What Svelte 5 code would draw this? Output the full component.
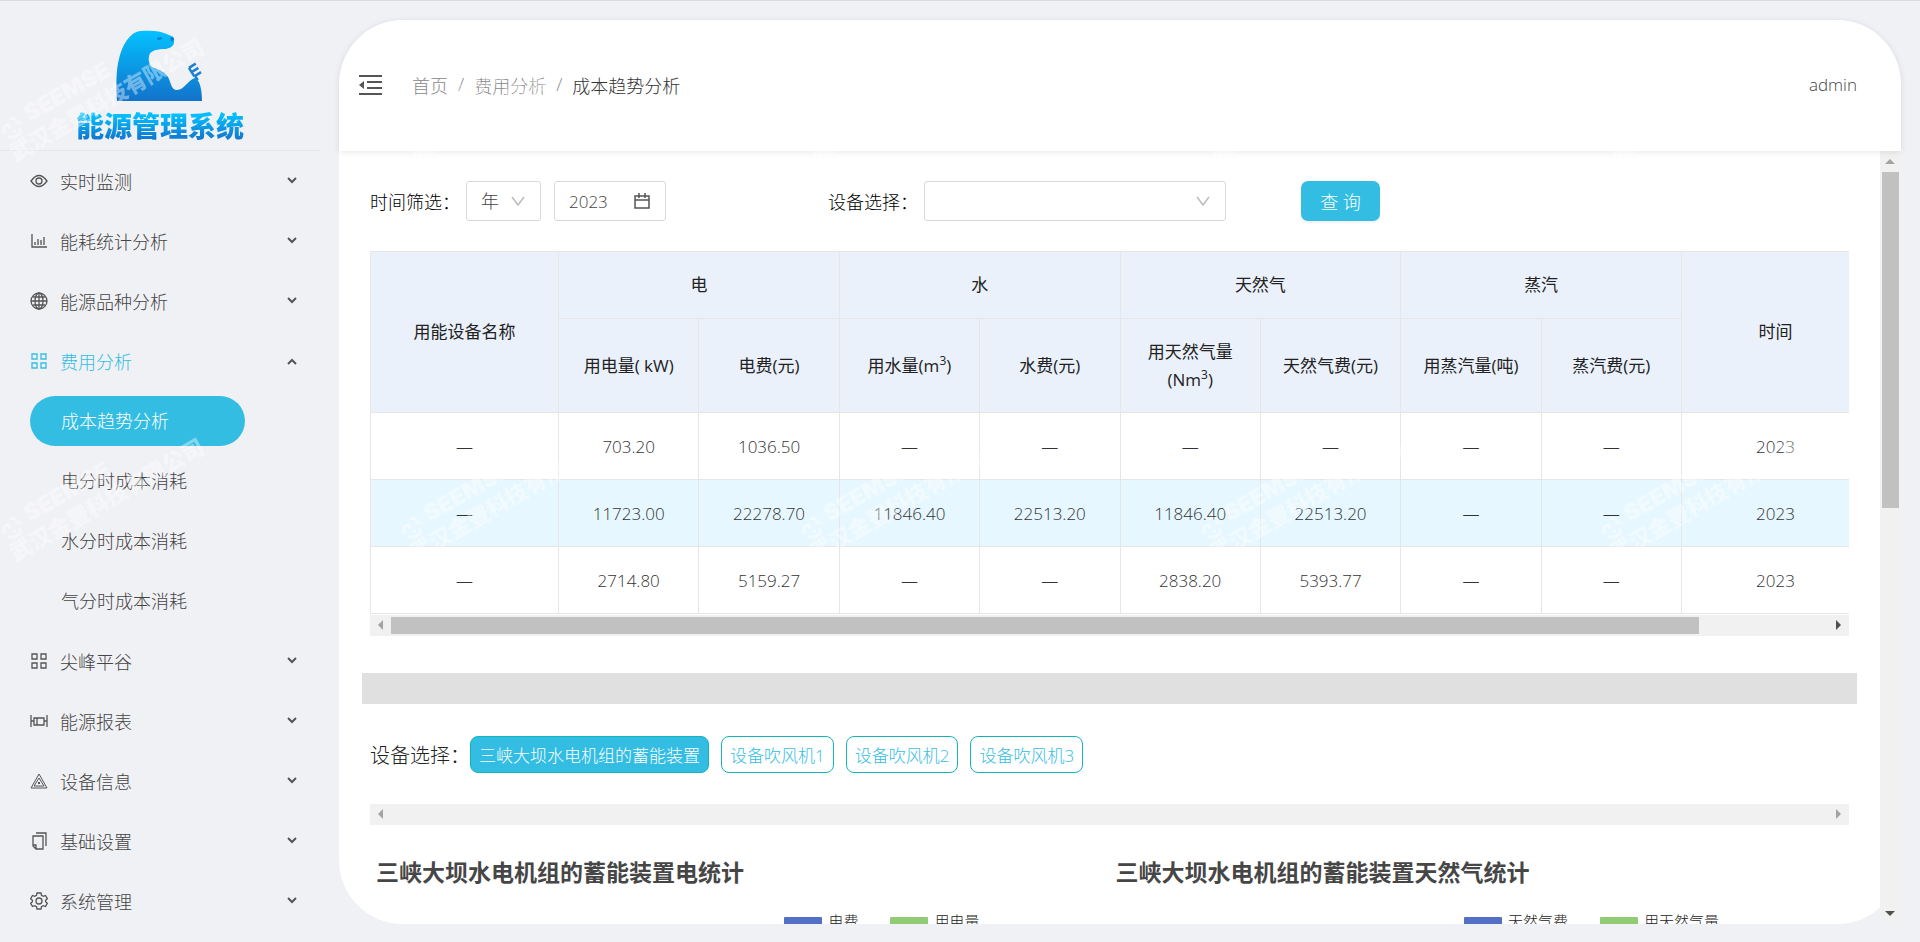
<script lang="ts">
    type MenuItem = { icon: string; label: string; open?: boolean; children?: string[] };

    let menu: MenuItem[] = [
        { icon: 'eye', label: '实时监测' },
        { icon: 'chart', label: '能耗统计分析' },
        { icon: 'globe', label: '能源品种分析' },
        {
            icon: 'grid',
            label: '费用分析',
            open: true,
            children: ['成本趋势分析', '电分时成本消耗', '水分时成本消耗', '气分时成本消耗']
        },
        { icon: 'grid', label: '尖峰平谷' },
        { icon: 'report', label: '能源报表' },
        { icon: 'triangle', label: '设备信息' },
        { icon: 'copy', label: '基础设置' },
        { icon: 'gear', label: '系统管理' }
    ];

    const rows = [
        ['—', '703.20', '1036.50', '—', '—', '—', '—', '—', '—', '2023'],
        ['—', '11723.00', '22278.70', '11846.40', '22513.20', '11846.40', '22513.20', '—', '—', '2023'],
        ['—', '2714.80', '5159.27', '—', '—', '2838.20', '5393.77', '—', '—', '2023']
    ];

    const devices = ['三峡大坝水电机组的蓄能装置', '设备吹风机1', '设备吹风机2', '设备吹风机3'];

    const charts = [
        { title: '三峡大坝水电机组的蓄能装置电统计', legend: ['电费', '用电量'] },
        { title: '三峡大坝水电机组的蓄能装置天然气统计', legend: ['天然气费', '用天然气量'] }
    ];

    let currentPage = '成本趋势分析';
    let currentDevice = devices[0];
    let timeType = 'year';
    let year = '2023';
    let device = '';
    let hoverRow = 1;

    function toggle(item: MenuItem) {
        item.open = !item.open;
        menu = menu;
    }
</script>

<div class="layout">
    <aside class="sidebar">
        <div class="logo">
            <svg class="bear" width="88" height="72" viewBox="0 0 88 72" aria-hidden="true">
                <defs>
                    <linearGradient id="bearFill" x1="0" y1="0" x2="0" y2="1">
                        <stop offset="0" stop-color="#04c1ff" />
                        <stop offset="1" stop-color="#1273cb" />
                    </linearGradient>
                </defs>
                <path
                    fill="url(#bearFill)"
                    d="M1 71C0 56 0 40 3 29C7 12 16 1 25 1C36 0 46 1 53 5C57 6 59 8 58 12C58 16 54 18 50 19C42 19 34 20 33 26C32 32 34 36 38 38C44 40 49 42 52 47C55 52 55 60 61 60C68 60 72 50 79 48C84 50 86 60 86 71Z"
                />
                <path d="M41 8l4-1l1 2l-4 1zM54 8l3-1l1 2l-2 3z" fill="#1674c8" />
                <path
                    transform="translate(79 40) rotate(-32)"
                    d="M-4-5v10M-4-5h8M-4 0h8M-4 5h8M-3 5v5"
                    fill="none"
                    stroke="#1b7fd4"
                    stroke-width="2.4"
                />
            </svg>
            <h1>能源管理系统</h1>
        </div>
        <nav>
            {#each menu as item}
                <button class="menu-title" class:active={item.open} on:click={() => toggle(item)}>
                    <svg class="menu-icon" width="18" height="18" viewBox="0 0 18 18" aria-hidden="true">
                        {#if item.icon === 'eye'}
                            <path d="M1 9Q9-2 17 9Q9 20 1 9Z" />
                            <circle cx="9" cy="9" r="3" />
                        {:else if item.icon === 'chart'}
                            <path d="M2 2v13h15M5 13v-3M8 13V7M11 13V8M14 13V5" />
                        {:else if item.icon === 'globe'}
                            <circle cx="9" cy="9" r="8" />
                            <ellipse cx="9" cy="9" rx="4" ry="8" />
                            <path d="M1 9h16M9 1v16M3 5h12M3 13h12" />
                        {:else if item.icon === 'grid'}
                            <path d="M2 2h5v5h-5zM11 2h5v5h-5zM2 11h5v5h-5zM11 11h5v5h-5z" />
                        {:else if item.icon === 'report'}
                            <path d="M1 3v12M17 3v12M1 9h3M14 9h3M4 6h10v7H4zM7 6v7" />
                        {:else if item.icon === 'triangle'}
                            <g stroke-width="1">
                                <path d="M9 2L17 16H1ZM9 6L14 14H4Z" />
                                <path d="M9 10v2" stroke-width="2" />
                            </g>
                        {:else if item.icon === 'copy'}
                            <path d="M3 4h10v13H6L3 14zM3 13h3v4M6 1h10v13" />
                        {:else}
                            <circle cx="9" cy="9" r="3" />
                            <path
                                d="M7 1h4l.5 2.300l1.800 1l2.200-.8l1.800 3.200l-1.700 1.500v1.600l1.700 1.500l-1.800 3.200l-2.200-.8l-1.800 1L11 17H7l-.5-2.300l-1.800-1l-2.200.8l-1.800-3.200l1.700-1.500V8.200L.7 6.700l1.800-3.200l2.200.8l1.800-1z"
                            />
                        {/if}
                    </svg>
                    <span>{item.label}</span>
                    <svg class="arrow" class:up={item.open} width="12" height="8" viewBox="0 0 12 8" aria-hidden="true">
                        <path d="M2 1l4 4l4-4" />
                    </svg>
                </button>
                {#if item.open && item.children}
                    <ul>
                        {#each item.children as child}
                            <li>
                                <a
                                    href="#/{child}"
                                    class:current={child === currentPage}
                                    on:click={() => (currentPage = child)}>{child}</a
                                >
                            </li>
                        {/each}
                    </ul>
                {/if}
            {/each}
        </nav>
    </aside>

    <main>
        <header>
            <button class="fold" aria-label="收起菜单">
                <svg width="24" height="22" viewBox="0 0 24 22" aria-hidden="true">
                    <path d="M0 2h23M8 8h15M8 14h15M0 20h23" fill="none" stroke="#555" stroke-width="2" />
                    <path d="M0 11l5-4v8z" fill="#555" />
                </svg>
            </button>
            <div class="breadcrumb">
                <a href="#/">首页</a>
                <i>/</i>
                <a href="#/cost">费用分析</a>
                <i>/</i>
                <span>成本趋势分析</span>
            </div>
            <span class="user">admin</span>
        </header>

        <div class="scroll-area">
            <div class="content">
                <form class="filters" on:submit|preventDefault>
                    <label for="time-type">时间筛选：</label>
                    <div class="field time-type">
                        <select id="time-type" bind:value={timeType}>
                            <option value="year">年</option>
                            <option value="month">月</option>
                            <option value="day">日</option>
                        </select>
                        <svg width="14" height="12" viewBox="0 0 14 12" aria-hidden="true">
                            <path d="M1 2l6 8l6-8" />
                        </svg>
                    </div>
                    <div class="field year">
                        <input type="text" aria-label="年份" bind:value={year} />
                        <svg class="dark" width="16" height="16" viewBox="0 0 16 16" aria-hidden="true">
                            <path d="M1 3h14v12H1zM1 7h14M5 0v5M11 0v5" />
                        </svg>
                    </div>
                    <label class="device-label" for="device">设备选择：</label>
                    <div class="field device">
                        <select id="device" bind:value={device}>
                            <option value=""></option>
                            {#each devices as d}
                                <option value={d}>{d}</option>
                            {/each}
                        </select>
                        <svg width="14" height="12" viewBox="0 0 14 12" aria-hidden="true">
                            <path d="M1 2l6 8l6-8" />
                        </svg>
                    </div>
                    <button class="search">查 询</button>
                </form>

                <div class="table-wrap">
                    <table>
                        <colgroup>
                            <col class="name" />
                            <col span="8" />
                            <col class="name" />
                        </colgroup>
                        <thead>
                            <tr>
                                <th rowspan="2">用能设备名称</th>
                                <th colspan="2">电</th>
                                <th colspan="2">水</th>
                                <th colspan="2">天然气</th>
                                <th colspan="2">蒸汽</th>
                                <th rowspan="2">时间</th>
                            </tr>
                            <tr class="sub">
                                <th>用电量( kW)</th>
                                <th>电费(元)</th>
                                <th>用水量(m<sup>3</sup>)</th>
                                <th>水费(元)</th>
                                <th>用天然气量(Nm<sup>3</sup>)</th>
                                <th>天然气费(元)</th>
                                <th>用蒸汽量(吨)</th>
                                <th>蒸汽费(元)</th>
                            </tr>
                        </thead>
                        <tbody>
                            {#each rows as row, i}
                                <tr class:hover={i === hoverRow} on:mouseenter={() => (hoverRow = i)}>
                                    {#each row as cell}
                                        <td>{cell}</td>
                                    {/each}
                                </tr>
                            {/each}
                        </tbody>
                    </table>
                </div>
                <div class="hbar" aria-hidden="true">
                    <span class="tri left"></span>
                    <div class="track"><div class="thumb"></div></div>
                    <span class="tri right on"></span>
                </div>

                <div class="divider"></div>

                <div class="devices">
                    <span>设备选择：</span>
                    {#each devices as d}
                        <button class:selected={d === currentDevice} on:click={() => (currentDevice = d)}>{d}</button>
                    {/each}
                </div>
                <div class="hbar" aria-hidden="true">
                    <span class="tri left"></span>
                    <div class="track"></div>
                    <span class="tri right"></span>
                </div>

                <div class="charts">
                    {#each charts as chart}
                        <section>
                            <h2>{chart.title}</h2>
                            <div class="legend">
                                {#each chart.legend as name}
                                    <span class="key">{name}</span>
                                {/each}
                            </div>
                        </section>
                    {/each}
                </div>
            </div>
            <div class="vbar" aria-hidden="true">
                <span class="tri top"></span>
                <div class="track"><div class="thumb"></div></div>
                <span class="tri bottom"></span>
            </div>
        </div>
    </main>

    <svg class="watermark" aria-hidden="true">
        <defs>
            <pattern id="mark" width="400" height="400" patternUnits="userSpaceOnUse">
                <g transform="translate(10 127) rotate(-30)">
                    <path
                        d="M-8 2l4-6h4v5M4-8l5 2v6l5 1M-6 6l4 4h8l3-5M2 3v4"
                        fill="none"
                        stroke="#fff"
                        stroke-width="3"
                    />
                    <text class="mark-en" x="20" y="5">SEEMSE</text>
                    <text class="mark-cn" x="-12" y="32">武汉金豐科技有限公司</text>
                </g>
            </pattern>
        </defs>
        <rect width="100%" height="100%" fill="url(#mark)" />
    </svg>
</div>

<style>
    :global(body) {
        background: #f0f1f5;
        color: #444;
        font-family: 'Open Sans', 'Noto Sans CJK SC', sans-serif;
        font-size: 18px;
        font-weight: 300;
    }
    button, select, input {
        font: inherit;
        color: inherit;
    }
    button {
        cursor: pointer;
    }
    a {
        color: inherit;
        text-decoration: none;
    }
    .layout {
        position: relative;
        display: grid;
        grid-template-columns: 339px minmax(0, 1fr);
        height: 100vh;
        box-sizing: border-box;
        padding-right: 19px;
        border-top: 1px solid #dadce1;
        overflow: hidden;
    }

    /* sidebar */
    .logo {
        display: flex;
        flex-direction: column;
        align-items: center;
        gap: 6px;
        box-sizing: border-box;
        height: 150px;
        margin-right: 19px;
        padding-top: 29px;
        border-bottom: 1px solid #e4e6ea;
    }
    h1 {
        margin: 0;
        font-size: 28px;
        line-height: 36px;
        font-weight: 900;
        background: linear-gradient(#04bfff 20%, #1273cb 90%);
        -webkit-background-clip: text;
        background-clip: text;
        color: transparent;
    }
    .menu-title {
        display: flex;
        align-items: center;
        gap: 12px;
        width: 100%;
        height: 60px;
        padding: 0 41px 0 30px;
        border: none;
        background: none;
        text-align: left;
    }
    .menu-title span {
        flex: 1;
    }
    .menu-icon, .arrow {
        fill: none;
        stroke: #555;
        stroke-width: 1.3;
    }
    .arrow {
        stroke-width: 2;
    }
    .arrow.up {
        transform: rotate(180deg);
    }
    .active span {
        color: #34bde3;
    }
    .active .menu-icon {
        stroke: #34bde3;
    }
    ul {
        margin: 0;
        padding: 0;
        list-style: none;
    }
    li {
        display: flex;
        align-items: center;
        height: 60px;
        padding-left: 30px;
    }
    li a {
        width: 184px;
        padding-left: 31px;
        border-radius: 25px;
        line-height: 50px;
    }
    li .current {
        background: #34bde3;
        color: #fff;
    }

    /* main panel */
    main {
        display: flex;
        flex-direction: column;
        min-height: 0;
        padding: 19px 0 18px;
    }
    header {
        position: relative;
        display: flex;
        align-items: center;
        flex: none;
        box-sizing: border-box;
        height: 131px;
        padding: 0 44px 2px 20px;
        background: #fff;
        border-radius: 64px 64px 0 0;
        box-shadow: 0 1px 6px rgba(0, 21, 41, 0.1);
    }
    .fold {
        display: flex;
        padding: 0;
        border: none;
        background: none;
    }
    .breadcrumb {
        display: flex;
        flex: 1;
        gap: 10px;
        margin-left: 29px;
        color: #888;
    }
    .breadcrumb i {
        font-style: normal;
    }
    .breadcrumb span {
        color: #333;
    }
    .user {
        font-size: 17px;
    }
    .scroll-area {
        display: grid;
        grid-template-columns: minmax(0, 1fr) 21px;
        flex: 1;
        min-height: 0;
        background: #fff;
        border-radius: 0 0 64px 64px;
    }
    .content {
        min-height: 0;
        overflow: hidden;
        padding: 30px 31px 0;
        border-radius: 0 0 0 64px;
    }
    .filters {
        display: flex;
        align-items: center;
        height: 40px;
    }
    .filters label {
        width: 96px;
        color: #000;
        white-space: nowrap;
    }
    .field {
        display: grid;
        align-items: center;
        box-sizing: border-box;
        height: 40px;
        border: 1px solid #d9d9d9;
        border-radius: 3px;
    }
    .field > * {
        grid-area: 1 / 1;
    }
    .field select, .field input {
        box-sizing: border-box;
        width: 100%;
        height: 38px;
        padding: 0 14px;
        border: none;
        background: none;
        outline: none;
        appearance: none;
    }
    .field svg {
        justify-self: end;
        margin-right: 15px;
        fill: none;
        stroke: #bbb;
        stroke-width: 1.5;
        pointer-events: none;
    }
    .field svg.dark {
        stroke: #555;
    }
    .time-type {
        width: 75px;
    }
    .year {
        width: 112px;
        margin-left: 13px;
    }
    .year input {
        font-size: 17px;
    }
    .filters .device-label {
        margin-left: 162px;
    }
    .device {
        width: 302px;
    }
    .search {
        width: 79px;
        height: 40px;
        margin-left: 75px;
        padding: 0;
        border: none;
        border-radius: 7px;
        background: #34bde3;
        color: #fff;
        box-shadow: 0 2px 2px rgba(0, 0, 0, 0.05);
    }

    /* table */
    .table-wrap {
        margin-top: 30px;
        padding-bottom: 1px;
        overflow: hidden;
    }
    table {
        table-layout: fixed;
        width: 1500px;
        min-width: 100%;
        border-collapse: collapse;
        text-align: center;
    }
    .name {
        width: 188px;
    }
    th, td {
        height: 66px;
        padding: 0;
        border: 1px solid #e6e6e6;
    }
    th {
        background: #eaf1fb;
        color: #222;
        font-size: 17px;
        line-height: 28px;
        font-weight: 400;
    }
    .sub th {
        height: 93px;
        padding: 0 8px;
    }
    sup {
        font-size: 12px;
        line-height: 0;
    }
    td {
        color: #333;
        font-size: 17px;
    }
    .hover td {
        background: #e6f7ff;
    }

    /* scrollbars */
    .hbar {
        display: flex;
        align-items: center;
        height: 21px;
        background: #f1f1f1;
    }
    .hbar .track {
        flex: 1;
    }
    .hbar .thumb {
        width: 91%;
        height: 17px;
        background: #c1c1c1;
    }
    .vbar {
        display: flex;
        flex-direction: column;
        align-items: center;
        background: #f1f1f1;
    }
    .vbar .track {
        flex: 1;
    }
    .vbar .thumb {
        width: 17px;
        height: 46%;
        background: #c1c1c1;
    }
    .tri {
        width: 21px;
        height: 21px;
        background: #a3a3a3;
    }
    .tri.left {
        clip-path: polygon(8px 10px, 13px 5px, 13px 15px);
    }
    .tri.right {
        clip-path: polygon(13px 10px, 8px 5px, 8px 15px);
    }
    .tri.top {
        clip-path: polygon(10px 8px, 15px 13px, 5px 13px);
    }
    .tri.bottom {
        clip-path: polygon(10px 13px, 15px 8px, 5px 8px);
    }
    .tri.on, .tri.bottom {
        background: #505050;
    }

    .divider {
        height: 31px;
        margin: 37px -8px 32px;
        background: #e0e0e0;
    }
    .devices {
        display: flex;
        align-items: center;
        gap: 12px;
        margin-bottom: 31px;
    }
    .devices span {
        width: 88px;
        color: #222;
        font-size: 20px;
        white-space: nowrap;
    }
    .devices button {
        box-sizing: border-box;
        height: 37px;
        padding: 0 8px;
        border: 1px solid #13b5bd;
        border-radius: 8px;
        background: #fff;
        color: #34bde3;
        font-size: 17px;
    }
    .devices .selected {
        background: #34bde3;
        color: #fff;
    }

    /* charts */
    .charts {
        display: grid;
        grid-template-columns: 1fr 1fr;
        padding-top: 32px;
    }
    h2 {
        margin: 0;
        padding-left: 6px;
        color: #464646;
        font-size: 23px;
        line-height: 30px;
        font-weight: 700;
    }
    .legend {
        display: flex;
        justify-content: flex-end;
        gap: 32px;
        height: 300px;
        margin-top: 24px;
        padding-right: 130px;
    }
    .key {
        display: flex;
        gap: 6px;
        color: #222;
        font-size: 15px;
        line-height: 20px;
    }
    .key::before {
        content: '';
        width: 38px;
        height: 12px;
        margin-top: 6px;
        border-radius: 1px;
        background: #5470c6;
    }
    .key + .key::before {
        background: #91cc75;
    }

    .watermark {
        position: absolute;
        top: 0;
        left: 0;
        width: 100%;
        height: 600px;
        opacity: 0.4;
        pointer-events: none;
    }
    .watermark text {
        fill: #fff;
        font-weight: 900;
    }
    .mark-en {
        font-family: Inter, sans-serif;
        font-size: 23px;
    }
    .mark-cn {
        font-size: 22px;
    }
</style>
